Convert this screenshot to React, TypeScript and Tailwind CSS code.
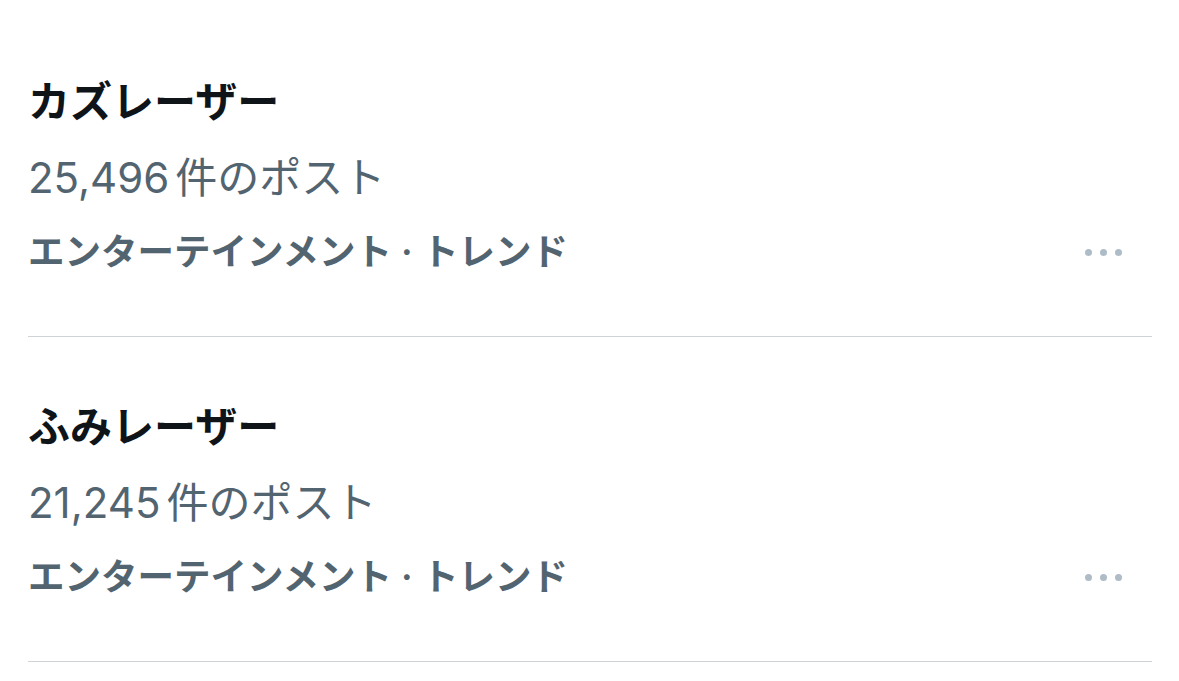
import React from 'react';

type Trend = {
  id: string;
  name: string;
  posts: string;
  category: string;
};

const trends: Trend[] = [
  { id: 'kazlaser', name: 'カズレーザー', posts: '25,496', category: 'エンターテインメント · トレンド' },
  { id: 'fumilaser', name: 'ふみレーザー', posts: '21,245', category: 'エンターテインメント · トレンド' },
];

const MoreDots: React.FC = () => (
  <div className="flex items-center gap-[8px] mr-[30px]">
    <span className="w-[7px] h-[7px] rounded-full bg-[#aebcc7]" />
    <span className="w-[7px] h-[7px] rounded-full bg-[#aebcc7]" />
    <span className="w-[7px] h-[7px] rounded-full bg-[#aebcc7]" />
  </div>
);

const TrendItem: React.FC<{ trend: Trend }> = ({ trend }) => (
  <div className="pt-[66px] pb-[62px] border-b border-[#cfd3d6]">
    <h2 className="h-[48px] text-[42px] leading-[48px] font-bold text-[#0f1419]">{trend.name}</h2>
    <p className="mt-[28px] h-[48px] text-[42px] leading-[48px] text-[#536471]">
      {trend.posts}
      <span className="ml-[6px]">件のポスト</span>
    </p>
    <div className="mt-[28px] h-[44px] flex items-center justify-between">
      <span className="text-[36.5px] leading-[44px] font-semibold text-[#536471] whitespace-pre">{trend.category}</span>
      <MoreDots />
    </div>
  </div>
);

export default function App() {
  return (
    <div
      className="w-[1179px] h-[681px] overflow-hidden bg-white pt-[12px] pl-[28px] pr-[27px]"
      style={{ fontFamily: 'Inter, "Noto Sans CJK JP", sans-serif' }}
    >
      {trends.map((t) => (
        <TrendItem key={t.id} trend={t} />
      ))}
    </div>
  );
}
